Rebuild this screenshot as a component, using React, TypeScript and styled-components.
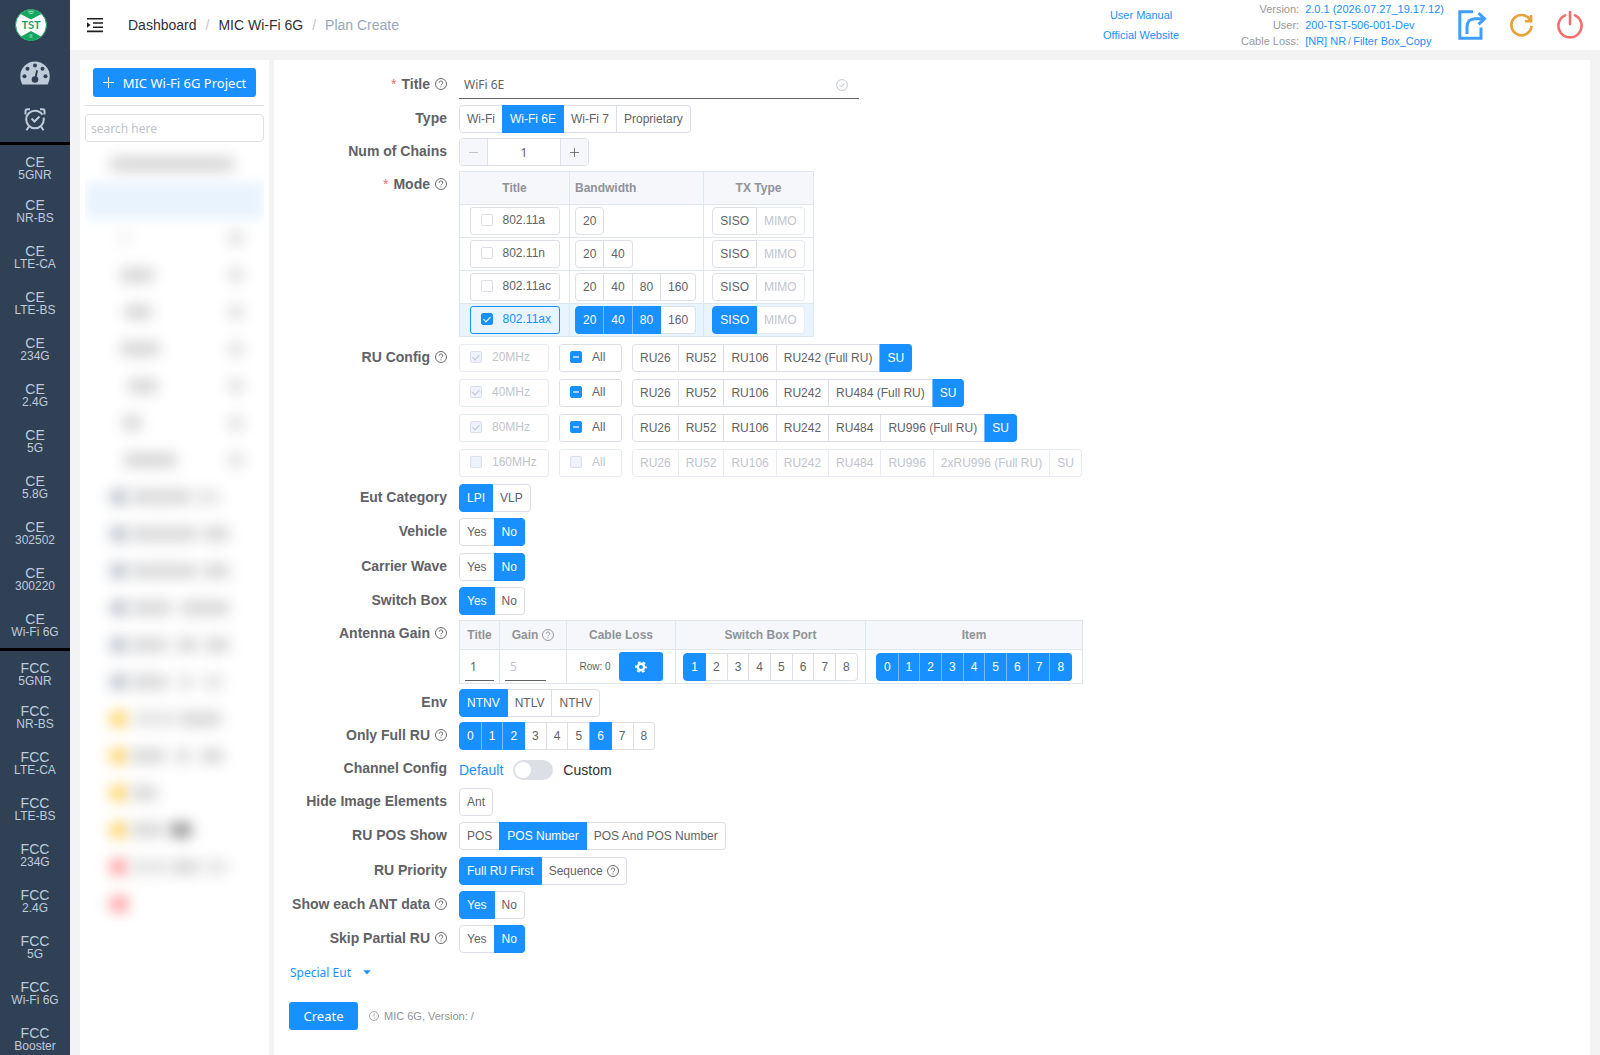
import React, { useEffect, useRef, useState } from "react";
import styled, { createGlobalStyle, css } from "styled-components";

const c = {
  blue: "#1890ff",
  blueSoft: "#74bcff",
  paleBlue: "#e8f4ff",
  text: "#606266",
  muted: "#909399",
  faint: "#c0c4cc",
  border: "#dcdfe6",
  borderSoft: "#e6ebf5",
  table: "#dfe6ec",
  nav: "#304156",
  navText: "#bfcbd9",
};
const humanist = `"Noto Sans", "Open Sans", sans-serif`;

const Global = createGlobalStyle`
  *, *::before, *::after { box-sizing: border-box; }
  body { margin: 0; background: #f3f3f3; color: ${c.text};
    font-family: "Liberation Sans", Arial, sans-serif; font-size: 12px; }
  button, input { font: inherit; color: inherit; }
  a { text-decoration: none; }
`;

/* ---------- shell ---------- */
const Shell = styled.div`
  display: flex;
  height: 100vh;
  overflow: hidden;
`;
const Nav = styled.nav`
  width: 70px;
  flex: none;
  overflow: hidden;
  background: ${c.nav};
  color: ${c.navText};
`;
const NavTop = styled.div`
  display: flex;
  flex-direction: column;
  align-items: center;
  height: 142px;
`;
const NavIcon = styled.a`
  display: flex;
  align-items: center;
  justify-content: center;
  width: 70px;
  height: 46px;
  color: ${c.navText};
`;
const Logo = styled(NavIcon)`
  height: 50px;
  padding-right: 8px;
`;
const NavGroup = styled.div`
  border-top: 3px solid #000;
`;
const NavItem = styled.a`
  display: flex;
  flex-direction: column;
  align-items: center;
  height: 46px;
  padding-top: 11px;
  color: ${c.navText};
  line-height: 12px;
  &:first-child { height: 43px; }
`;
const NavCode = styled.span`
  font-size: 14px;
  line-height: 13px;
`;
const Page = styled.div`
  display: flex;
  flex: 1;
  flex-direction: column;
  min-width: 0;
`;

/* ---------- header ---------- */
const Header = styled.header`
  display: flex;
  align-items: center;
  height: 50px;
  flex: none;
  padding: 0 16px 0 16px;
  background: #fff;
`;
const IconButton = styled.button`
  display: flex;
  padding: 0;
  border: 0;
  background: none;
  cursor: pointer;
`;
const Crumbs = styled.nav`
  display: flex;
  gap: 9px;
  margin-left: 24px;
  font-size: 14px;
  color: #97a8be;
  a { color: #303133; }
`;
const Slash = styled.span`
  color: ${c.faint};
`;
const Links = styled.div`
  display: flex;
  flex-direction: column;
  align-items: center;
  margin-left: auto;
  font-size: 11px;
  line-height: 20px;
  a { color: ${c.blue}; }
`;
const Info = styled.dl`
  display: grid;
  grid-template-columns: auto auto;
  column-gap: 6px;
  margin: 0 14px 0 62px;
  font-size: 11px;
  line-height: 16px;
  dt { text-align: right; color: #999; }
  dd { margin: 0; color: ${c.blue}; }
  i { font-style: normal; color: ${c.muted}; margin: 0 2px; }
`;
const Actions = styled.div`
  display: flex;
  align-items: center;
  gap: 22px;
`;

/* ---------- side panel ---------- */
const Body = styled.div`
  display: flex;
  flex: 1;
  gap: 5px;
  min-height: 0;
  padding: 10px 10px 0;
`;
const Tree = styled.aside`
  display: flex;
  flex-direction: column;
  width: 189px;
  flex: none;
  padding: 8px 5px 0;
  background: #fff;
  overflow: hidden;
`;
const Primary = styled.button`
  display: flex;
  align-items: center;
  justify-content: center;
  gap: 9px;
  height: 28px;
  padding: 0 15px;
  border: 0;
  border-radius: 3px;
  background: ${c.blue};
  color: #fff;
  font-family: ${humanist};
  font-size: 13px;
  white-space: nowrap;
  cursor: pointer;
`;
const ProjectButton = styled(Primary)`
  align-self: center;
  width: 163px;
  height: 29px;
  padding: 0;
`;
const Rule = styled.hr`
  width: 100%;
  margin: 8px 0;
  border: 0;
  border-top: 1px solid ${c.border};
`;
const Search = styled.input`
  width: 100%;
  height: 28px;
  flex: none;
  padding: 0 5px;
  border: 1px solid ${c.border};
  border-radius: 4px;
  font-family: ${humanist};
  outline: none;
  &::placeholder { color: ${c.faint}; }
`;
const TreeList = styled.div`
  padding-top: 3px;
  overflow: hidden;
`;
const TreeRow = styled.div<{ $active?: boolean }>`
  display: flex;
  align-items: center;
  height: 37px;
  ${(p) => p.$active && css`
    background: #e9f3fe;
    filter: blur(6px);
  `}
`;
const Blob = styled.span<{ $w: number; $x: number; $tone: string }>`
  width: ${(p) => p.$w}px;
  height: 16px;
  margin-left: ${(p) => p.$x}px;
  border-radius: 8px;
  background: ${(p) => p.$tone};
  filter: blur(7px);
`;
const Trailing = styled(Blob)`
  margin-left: auto;
  margin-right: 20px;
`;

/* ---------- form ---------- */
const Main = styled.main`
  flex: 1;
  min-width: 0;
  padding: 11px 15px 0;
  background: #fff;
  overflow: auto;
`;
const Row = styled.div<{ $gap?: number }>`
  display: flex;
  align-items: flex-start;
  min-height: 28px;
  margin-bottom: ${(p) => p.$gap ?? 5}px;
`;
const RowLabel = styled.div`
  display: flex;
  align-items: center;
  justify-content: flex-end;
  gap: 5px;
  width: 170px;
  flex: none;
  padding-right: 12px;
  font-size: 14px;
  font-weight: 700;
  line-height: 26px;
  white-space: nowrap;
`;
const Star = styled.span`
  color: #f56c6c;
  font-weight: 400;
`;
const TitleBox = styled.div`
  display: flex;
  align-items: center;
  width: 400px;
  height: 28px;
  padding: 0 11px 0 5px;
  border-bottom: 1px solid ${c.text};
`;
const TitleInput = styled.input`
  flex: 1;
  min-width: 0;
  padding: 0;
  border: 0;
  outline: none;
  background: none;
  font-family: ${humanist};
`;
const Group = styled.div`
  display: inline-flex;
  vertical-align: middle;
`;
const Option = styled.label<{ $on?: boolean; $off?: boolean; $multi?: boolean }>`
  position: relative;
  display: flex;
  align-items: center;
  gap: 4px;
  height: 28px;
  padding: 0 7px;
  border: 1px solid ${(p) => (p.$off ? c.borderSoft : c.border)};
  border-left-width: 0;
  background: #fff;
  color: ${(p) => (p.$off ? c.faint : c.text)};
  white-space: nowrap;
  cursor: pointer;
  &:first-child { border-left-width: 1px; border-radius: 4px 0 0 4px; }
  &:last-child { border-radius: 0 4px 4px 0; }
  &:only-child { border-radius: 4px; }
  ${(p) => p.$on && css`
    border-color: ${c.blue};
    background: ${c.blue};
    color: #fff;
    &:not(:first-child) { box-shadow: -1px 0 0 0 ${p.$multi ? c.blueSoft : c.blue}; }
  `}
  input { position: absolute; inset: 0; margin: 0; opacity: 0; cursor: inherit; }
`;
const Tick = styled.label<{ $w: number; $on?: boolean; $off?: boolean }>`
  display: inline-flex;
  align-items: center;
  gap: 10px;
  width: ${(p) => p.$w}px;
  height: 28px;
  padding: 0 0 2px 10px;
  border: 1px solid ${(p) => (p.$on ? c.blue : p.$off ? c.borderSoft : c.border)};
  border-radius: 3px;
  background: ${(p) => (p.$on ? c.paleBlue : "#fff")};
  color: ${(p) => (p.$on ? c.blue : p.$off ? c.faint : c.text)};
  vertical-align: middle;
  white-space: nowrap;
`;
const TickBox = styled.input`
  appearance: none;
  display: flex;
  align-items: center;
  justify-content: center;
  width: 12px;
  height: 12px;
  flex: none;
  margin: 0;
  border: 1px solid ${c.border};
  border-radius: 2px;
  background: #fff;
  &:checked, &:indeterminate { border-color: ${c.blue}; background: ${c.blue}; }
  &:checked::after {
    content: "";
    width: 4px;
    height: 7px;
    margin-bottom: 2px;
    border: solid #fff;
    border-width: 0 1px 1px 0;
    transform: rotate(45deg);
  }
  &:indeterminate::after { content: ""; width: 6px; height: 2px; background: #a3d3ff; }
  &:disabled { border-color: ${c.border}; background: #edf2fc; }
  &:disabled::after { border-color: ${c.faint}; }
`;
const Stepper = styled.div`
  display: flex;
  width: 130px;
  height: 28px;
  border: 1px solid ${c.border};
  border-radius: 4px;
  overflow: hidden;
  button {
    display: flex;
    align-items: center;
    justify-content: center;
    width: 27px;
    flex: none;
    padding: 0;
    border: 0;
    background: #f5f7fa;
    color: ${c.text};
  }
  button:disabled { color: ${c.faint}; }
  input {
    flex: 1;
    min-width: 0;
    padding: 0;
    border: solid ${c.border};
    border-width: 0 1px;
    outline: none;
    text-align: center;
    font-family: ${humanist};
  }
`;
const Table = styled.table`
  border-collapse: collapse;
  table-layout: fixed;
  width: min-content;
  td, th { padding: 0; border: 1px solid ${c.table}; text-align: center; }
  th { background: #f5f7fa; color: ${c.muted}; font-weight: 700; }
`;
const ModeTable = styled(Table)`
  tr { height: 33px; }
  td:nth-child(2), th:nth-child(2) { padding-left: 5px; text-align: left; }
`;
const ModeRow = styled.tr<{ $on?: boolean }>`
  background: ${(p) => (p.$on ? c.paleBlue : "#fff")};
`;
const GainTable = styled(Table)`
  thead tr { height: 29px; }
  tbody tr { height: 34px; }
`;
const HeadWithIcon = styled.span`
  display: inline-flex;
  align-items: center;
  gap: 4px;
  vertical-align: middle;
`;
const CellInput = styled.input<{ $w: number }>`
  display: block;
  width: ${(p) => p.$w}px;
  height: 28px;
  margin-left: 5px;
  padding: 0 5px;
  border: 0;
  border-bottom: 1px solid ${c.text};
  outline: none;
  font-family: ${humanist};
  &::placeholder { color: ${c.faint}; }
`;
const Loss = styled.div`
  display: flex;
  align-items: center;
  justify-content: center;
  gap: 8px;
  font-size: 10px;
`;
const GearButton = styled(Primary)`
  width: 44px;
  height: 29px;
  padding: 0;
`;
const RuLines = styled.div`
  display: flex;
  flex-direction: column;
  gap: 7px;
`;
const RuLine = styled.div`
  display: flex;
  gap: 10px;
`;
const Channel = styled.div`
  display: flex;
  align-items: center;
  gap: 10px;
  height: 30px;
  font-size: 14px;
  color: #303133;
`;
const ChannelOn = styled.span`
  color: ${c.blue};
`;
const Switch = styled.input`
  appearance: none;
  display: flex;
  width: 40px;
  height: 20px;
  margin: 0;
  padding: 2px;
  border-radius: 10px;
  background: ${c.border};
  &::after { content: ""; width: 16px; height: 16px; border-radius: 8px; background: #fff; }
  &:checked { justify-content: flex-end; background: ${c.blue}; }
`;
const TextButton = styled.button`
  display: flex;
  align-items: center;
  gap: 12px;
  height: 28px;
  margin: 0 0 15px;
  padding: 0 1px 2px;
  border: 0;
  background: none;
  color: ${c.blue};
  font-family: ${humanist};
`;
const Footer = styled.div`
  display: flex;
  align-items: center;
  gap: 11px;
  color: ${c.muted};
  font-size: 11px;
`;
const Note = styled.span`
  display: flex;
  align-items: center;
  gap: 5px;
`;
const CreateButton = styled(Primary)`
  width: 69px;
  padding: 0;
`;

/* ---------- icons ---------- */
const HelpIcon = () => (
  <svg width="12" height="12" viewBox="0 0 14 14" fill="none" stroke="currentColor">
    <circle cx="7" cy="7" r="6.400" strokeWidth="1.100" />
    <path d="M5 5.500a2 2 0 1 1 2.900 1.700c-.6.3-.9.6-.9 1.400" strokeWidth="1.100" />
    <circle cx="7" cy="10.400" r=".3" strokeWidth=".8" />
  </svg>
);
const LogoIcon = () => (
  <svg width="32" height="32" viewBox="0 0 32 32">
    <circle cx="16" cy="16" r="15.500" fill="#fff" stroke="#14a660" />
    <path d="M5.500 5A15.500 15.500 0 0 1 26.500 5L16 10.500z" fill="#14a660" />
    <path d="M6 27.500A15.500 15.500 0 0 0 26 27.500L16 22z" fill="#14a660" />
    <path d="M13 3.200q3-2 6 0M14.200 4.800q1.800-1.200 3.600 0M14.500 26h3M14.500 28h3" stroke="#c9f0dc" fill="none" strokeWidth=".8" />
    <text x="16" y="20" textAnchor="middle" fontFamily="Lato, sans-serif" fontWeight="700" fontSize="11" fill="#14a660">TST</text>
  </svg>
);
const GaugeIcon = () => (
  <svg width="30" height="24" viewBox="0 0 30 24">
    <path d="M15 .5A14.700 14.700 0 0 0 .3 15.200c0 3 .7 5.800 2 8.300h25.400c1.300-2.500 2-5.300 2-8.300A14.700 14.700 0 0 0 15 .5z" fill={c.navText} />
    <g fill={c.nav}>
      <circle cx="15" cy="4.600" r="2" />
      <circle cx="7.500" cy="7.800" r="2" />
      <circle cx="22.500" cy="7.800" r="2" />
      <circle cx="4.500" cy="15.200" r="2" />
      <circle cx="25.500" cy="15.200" r="2" />
      <circle cx="15" cy="18.500" r="3.300" />
      <path d="M16.200 9l1.900.4-2 9-1.900-.4z" />
    </g>
  </svg>
);
const ClockIcon = () => (
  <svg width="22" height="23" viewBox="0 0 22 23" fill="none" stroke={c.navText} strokeWidth="2">
    <circle cx="11" cy="11.500" r="8.800" strokeDasharray="50 3 10 0" />
    <path d="M7.500 10.500l3 3 5-5M5 18.500l-2.500 3.700M17 18.500l2.500 3.700" />
    <path d="M1.500 6.500V3.200c0-1.200.7-2 1.900-2H6M20.500 6.500V3.200c0-1.200-.7-2-1.900-2H16" />
  </svg>
);
const MenuIcon = () => (
  <svg width="18" height="16" viewBox="0 0 18 16" stroke="#1f1f1f" strokeWidth="1.600">
    <path d="M1 1.800h16M7 6h10M7 10.200h10M1 14.400h16" />
    <path d="M1 5.200L4.500 8 1 10.800z" fill="#1f1f1f" stroke="none" />
  </svg>
);
const ExportIcon = () => (
  <svg width="29" height="30" viewBox="0 0 29 30" fill="none" stroke="#409eff" strokeWidth="3">
    <path d="M15 1.800H1.800v26.400H23V17.500" />
    <path d="M9 24v-7c0-5.500 3-8.300 8-8.300h9" />
    <path d="M20.500 3l6 5.700-6 5.700" />
  </svg>
);
const ReloadIcon = () => (
  <svg width="25" height="26" viewBox="0 0 26 26" fill="none" stroke="#e6a23c" strokeWidth="2.800">
    <path d="M22.700 9A10.500 10.500 0 1 0 23.500 14" />
    <path d="M23 2.500V9h-6.500" strokeWidth="2.600" />
  </svg>
);
const PowerIcon = () => (
  <svg width="28" height="28" viewBox="0 0 28 28" fill="none" stroke="#f56c6c" strokeWidth="2.600">
    <path d="M9 4.300a11.600 11.600 0 1 0 10 0M14 1v12" strokeLinecap="round" />
  </svg>
);
const PlusIcon = ({ size = 11 }: { size?: number }) => (
  <svg width={size} height={size} viewBox="0 0 11 11" stroke="currentColor">
    <path d="M5.500 0v11M0 5.500h11" />
  </svg>
);
const MinusIcon = () => (
  <svg width="9" height="9" viewBox="0 0 9 9" stroke="currentColor">
    <path d="M0 4.500h9" />
  </svg>
);
const CheckCircle = () => (
  <svg width="12" height="12" viewBox="0 0 12 12" fill="none" stroke={c.faint}>
    <circle cx="6" cy="6" r="5.400" />
    <path d="M3.400 6.200l1.900 1.800L8.800 4.400" />
  </svg>
);
const GearIcon = () => (
  <svg width="12" height="12" viewBox="0 0 12 12" fill="none" stroke="#fff">
    <circle cx="6" cy="6" r="3.200" strokeWidth="2.400" />
    <circle cx="6" cy="6" r="5" strokeWidth="1.800" strokeDasharray="2.600 2.636" strokeDashoffset="1.300" />
  </svg>
);
const NoteIcon = () => (
  <svg width="10" height="10" viewBox="0 0 10 10" fill="none" stroke="currentColor">
    <circle cx="5" cy="5" r="4.500" strokeWidth=".8" />
    <path d="M5 2.500v3.300M5 6.700v1" strokeWidth=".8" />
  </svg>
);
const Caret = () => (
  <svg width="8" height="5" viewBox="0 0 8 5" fill="currentColor">
    <path d="M.3.200h7.400L4 4.600z" />
  </svg>
);

/* ---------- pieces ---------- */
type SegmentProps = {
  name: string;
  items: string[];
  on?: string[];
  off?: string[];
  multi?: boolean;
  help?: string;
};
const Segment = ({ name, items, on = [], off = [], multi, help }: SegmentProps) => {
  const [picked, setPicked] = useState(on);
  const toggle = (item: string) =>
    setPicked(!multi ? [item] : picked.includes(item) ? picked.filter((i) => i !== item) : [...picked, item]);
  return (
    <Group role="group" aria-label={name}>
      {items.map((item) => (
        <Option key={item} $on={picked.includes(item)} $off={off.includes(item)} $multi={multi}>
          <input
            type={multi ? "checkbox" : "radio"}
            name={name}
            checked={picked.includes(item)}
            disabled={off.includes(item)}
            onChange={() => toggle(item)}
          />
          {item}
          {help === item && <HelpIcon />}
        </Option>
      ))}
    </Group>
  );
};

type CheckProps = { text: string; width: number; checked?: boolean; mixed?: boolean; off?: boolean; accent?: boolean };
const Check = ({ text, width, checked = false, mixed = false, off, accent }: CheckProps) => {
  const box = useRef<HTMLInputElement>(null);
  useEffect(() => {
    if (box.current) box.current.indeterminate = mixed;
  }, [mixed]);
  return (
    <Tick $w={width} $on={accent} $off={off}>
      <TickBox ref={box} type="checkbox" defaultChecked={checked} disabled={off} />
      {text}
    </Tick>
  );
};

type FieldProps = { label: string; help?: boolean; required?: boolean; gap?: number; children: React.ReactNode };
const Field = ({ label, help, required, gap, children }: FieldProps) => (
  <Row $gap={gap}>
    <RowLabel>
      {required && <Star>*</Star>}
      {label}
      {help && <HelpIcon />}
    </RowLabel>
    {children}
  </Row>
);

/* ---------- data ---------- */
const ce = ["5GNR", "NR-BS", "LTE-CA", "LTE-BS", "234G", "2.4G", "5G", "5.8G", "302502", "300220", "Wi-Fi 6G"];
const fcc = ["5GNR", "NR-BS", "LTE-CA", "LTE-BS", "234G", "2.4G", "5G", "Wi-Fi 6G", "Booster"];
const digits = ["0", "1", "2", "3", "4", "5", "6", "7", "8"];
const modes = [
  { title: "802.11a", widths: ["20"] },
  { title: "802.11n", widths: ["20", "40"] },
  { title: "802.11ac", widths: ["20", "40", "80", "160"] },
  { title: "802.11ax", widths: ["20", "40", "80", "160"], on: ["20", "40", "80"] },
];
const ruRows = [
  { band: "20MHz", units: ["RU26", "RU52", "RU106", "RU242 (Full RU)", "SU"] },
  { band: "40MHz", units: ["RU26", "RU52", "RU106", "RU242", "RU484 (Full RU)", "SU"] },
  { band: "80MHz", units: ["RU26", "RU52", "RU106", "RU242", "RU484", "RU996 (Full RU)", "SU"] },
  { band: "160MHz", off: true, units: ["RU26", "RU52", "RU106", "RU242", "RU484", "RU996", "2xRU996 (Full RU)", "SU"] },
];
const leaves = [
  [36, 8], [34, 36], [38, 30], [34, 42], [42, 32], [36, 22], [38, 55],
];

/* Folder rows: icon tone, then the [offset, width, tone] of each run of its name. */
const grey = "#dadada";
const pale = "#e6e6e6";
const folders: { tone: string; runs: [number, number, string][] }[] = [
  { tone: "#bfc4cc", runs: [[0, 64, grey], [0, 28, pale]] },
  { tone: "#bfc4cc", runs: [[0, 70, grey], [2, 30, grey]] },
  { tone: "#bfc4cc", runs: [[0, 70, grey], [2, 30, grey]] },
  { tone: "#bfc4cc", runs: [[0, 44, grey], [6, 52, grey]] },
  { tone: "#bfc4cc", runs: [[0, 40, grey], [6, 24, grey], [4, 28, grey]] },
  { tone: "#bfc4cc", runs: [[0, 40, grey], [6, 20, pale], [6, 24, pale]] },
  { tone: "#ffd466", runs: [[2, 46, pale], [0, 46, grey]] },
  { tone: "#ffd466", runs: [[0, 38, grey], [8, 16, grey], [8, 26, grey]] },
  { tone: "#ffd466", runs: [[0, 30, grey]] },
  { tone: "#ffd466", runs: [[0, 36, grey], [4, 24, "#9a9a9a"]] },
  { tone: "#ff9c9c", runs: [[0, 40, pale], [0, 32, grey], [2, 26, pale]] },
  { tone: "#ff9c9c", runs: [] },
];

export default function App() {
  return (
    <>
      <Global />
      <Shell>
        <Nav aria-label="Products">
          <NavTop>
            <Logo href="#" aria-label="TST"><LogoIcon /></Logo>
            <NavIcon href="#" aria-label="Gauge"><GaugeIcon /></NavIcon>
            <NavIcon href="#" aria-label="Schedule"><ClockIcon /></NavIcon>
          </NavTop>
          <NavGroup>
            {ce.map((n) => <NavItem key={n} href="#"><NavCode>CE</NavCode>{n}</NavItem>)}
          </NavGroup>
          <NavGroup>
            {fcc.map((n) => <NavItem key={n} href="#"><NavCode>FCC</NavCode>{n}</NavItem>)}
          </NavGroup>
        </Nav>
        <Page>
          <Header>
            <IconButton aria-label="Toggle menu"><MenuIcon /></IconButton>
            <Crumbs aria-label="Breadcrumb">
              <a href="#">Dashboard</a><Slash>/</Slash>
              <a href="#">MIC Wi-Fi 6G</a><Slash>/</Slash>
              <span>Plan Create</span>
            </Crumbs>
            <Links>
              <a href="#">User Manual</a>
              <a href="#">Official Website</a>
            </Links>
            <Info>
              <dt>Version:</dt><dd>2.0.1 (2026.07.27_19.17.12)</dd>
              <dt>User:</dt><dd>200-TST-506-001-Dev</dd>
              <dt>Cable Loss:</dt><dd>[NR] NR<i>/</i>Filter Box_Copy</dd>
            </Info>
            <Actions>
              <IconButton aria-label="Export"><ExportIcon /></IconButton>
              <IconButton aria-label="Reload"><ReloadIcon /></IconButton>
              <IconButton aria-label="Log out"><PowerIcon /></IconButton>
            </Actions>
          </Header>
          <Body>
            <Tree>
              <ProjectButton><PlusIcon />MIC Wi-Fi 6G Project</ProjectButton>
              <Rule />
              <Search placeholder="search here" aria-label="Search projects" />
              <TreeList aria-hidden="true">
                <TreeRow><Blob $x={24} $w={126} $tone="#d8d8d8" /></TreeRow>
                <TreeRow $active />
                {leaves.map(([x, w], i) => (
                  <TreeRow key={i}>
                    <Blob $x={x} $w={w} $tone={i ? "#d8d8d8" : "#eeeeee"} />
                    <Trailing $x={0} $w={16} $tone="#dedede" />
                  </TreeRow>
                ))}
                {folders.map((f, i) => (
                  <TreeRow key={i}>
                    <Blob $x={24} $w={20} $tone={f.tone} />
                    {f.runs.map(([x, w, tone], k) => <Blob key={k} $x={x} $w={w} $tone={tone} />)}
                  </TreeRow>
                ))}
              </TreeList>
            </Tree>
            <Main>
              <Field label="Title" required help gap={6}>
                <TitleBox>
                  <TitleInput aria-label="Title" defaultValue="WiFi 6E" />
                  <CheckCircle />
                </TitleBox>
              </Field>
              <Field label="Type">
                <Segment name="Type" items={["Wi-Fi", "Wi-Fi 6E", "Wi-Fi 7", "Proprietary"]} on={["Wi-Fi 6E"]} />
              </Field>
              <Field label="Num of Chains">
                <Stepper>
                  <button disabled aria-label="Decrease"><MinusIcon /></button>
                  <input aria-label="Num of Chains" defaultValue="1" />
                  <button aria-label="Increase"><PlusIcon size={9} /></button>
                </Stepper>
              </Field>
              <Field label="Mode" required help gap={7}>
                <ModeTable>
                  <colgroup><col style={{ width: 110 }} /><col style={{ width: 134 }} /><col style={{ width: 110 }} /></colgroup>
                  <thead><tr><th>Title</th><th>Bandwidth</th><th>TX Type</th></tr></thead>
                  <tbody>
                    {modes.map((m) => (
                      <ModeRow key={m.title} $on={!!m.on}>
                        <td><Check text={m.title} width={90} checked={!!m.on} accent={!!m.on} /></td>
                        <td><Segment name={`${m.title} bandwidth`} items={m.widths} on={m.on} multi /></td>
                        <td><Segment name={`${m.title} TX`} items={["SISO", "MIMO"]} on={m.on ? ["SISO"] : []} off={["MIMO"]} multi /></td>
                      </ModeRow>
                    ))}
                  </tbody>
                </ModeTable>
              </Field>
              <Field label="RU Config" help gap={7}>
                <RuLines>
                  {ruRows.map((r) => (
                    <RuLine key={r.band}>
                      <Check text={r.band} width={90} checked={!r.off} off />
                      <Check text="All" width={63} mixed={!r.off} off={r.off} />
                      <Segment name={`${r.band} RU`} items={r.units} on={r.off ? [] : ["SU"]} off={r.off ? r.units : []} multi />
                    </RuLine>
                  ))}
                </RuLines>
              </Field>
              <Field label="Eut Category" gap={6}><Segment name="Eut Category" items={["LPI", "VLP"]} on={["LPI"]} /></Field>
              <Field label="Vehicle" gap={7}><Segment name="Vehicle" items={["Yes", "No"]} on={["No"]} /></Field>
              <Field label="Carrier Wave" gap={6}><Segment name="Carrier Wave" items={["Yes", "No"]} on={["No"]} /></Field>
              <Field label="Switch Box"><Segment name="Switch Box" items={["Yes", "No"]} on={["Yes"]} /></Field>
              <Field label="Antenna Gain" help>
                <GainTable>
                  <colgroup>
                    <col style={{ width: 40 }} /><col style={{ width: 67 }} /><col style={{ width: 109 }} />
                    <col style={{ width: 190 }} /><col style={{ width: 217 }} />
                  </colgroup>
                  <thead>
                    <tr>
                      <th>Title</th>
                      <th><HeadWithIcon>Gain<HelpIcon /></HeadWithIcon></th>
                      <th>Cable Loss</th><th>Switch Box Port</th><th>Item</th>
                    </tr>
                  </thead>
                  <tbody>
                    <tr>
                      <td><CellInput $w={29} aria-label="Antenna title" defaultValue="1" /></td>
                      <td><CellInput $w={41} aria-label="Gain" placeholder="5" /></td>
                      <td><Loss>Row: 0<GearButton aria-label="Cable loss settings"><GearIcon /></GearButton></Loss></td>
                      <td><Segment name="Switch Box Port" items={digits.slice(1)} on={["1"]} /></td>
                      <td><Segment name="Item" items={digits} on={digits} multi /></td>
                    </tr>
                  </tbody>
                </GainTable>
              </Field>
              <Field label="Env"><Segment name="Env" items={["NTNV", "NTLV", "NTHV"]} on={["NTNV"]} multi /></Field>
              <Field label="Only Full RU" help><Segment name="Only Full RU" items={digits} on={["0", "1", "2", "6"]} multi /></Field>
              <Field label="Channel Config" gap={3}>
                <Channel>
                  <ChannelOn>Default</ChannelOn>
                  <Switch type="checkbox" role="switch" aria-label="Custom channel config" />
                  <span>Custom</span>
                </Channel>
              </Field>
              <Field label="Hide Image Elements" gap={6}><Segment name="Hide Image Elements" items={["Ant"]} multi /></Field>
              <Field label="RU POS Show" gap={7}>
                <Segment name="RU POS Show" items={["POS", "POS Number", "POS And POS Number"]} on={["POS Number"]} />
              </Field>
              <Field label="RU Priority" gap={6}>
                <Segment name="RU Priority" items={["Full RU First", "Sequence"]} on={["Full RU First"]} help="Sequence" />
              </Field>
              <Field label="Show each ANT data" help gap={6}><Segment name="Show each ANT data" items={["Yes", "No"]} on={["Yes"]} /></Field>
              <Field label="Skip Partial RU" help gap={6}><Segment name="Skip Partial RU" items={["Yes", "No"]} on={["No"]} /></Field>
              <TextButton>Special Eut<Caret /></TextButton>
              <Footer>
                <CreateButton>Create</CreateButton>
                <Note><NoteIcon />MIC 6G, Version: /</Note>
              </Footer>
            </Main>
          </Body>
        </Page>
      </Shell>
    </>
  );
}
